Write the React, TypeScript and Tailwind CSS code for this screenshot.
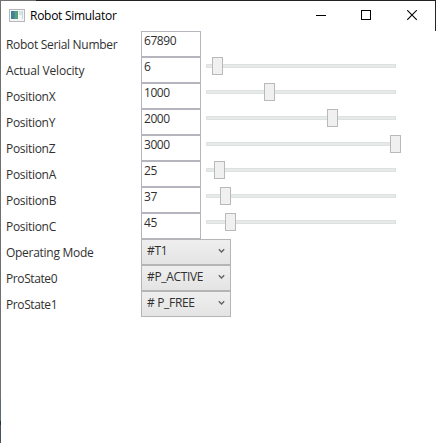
import React from "react";

type Row = { label: string; value: string; kind?: "select"; thumb?: number; labelWidth: string };

const rows: Row[] = [
  { label: "Robot Serial Number", value: "67890", labelWidth: "tracking-[-0.31px]" },
  { label: "Actual Velocity", value: "6", thumb: 6, labelWidth: "tracking-[-0.18px]" },
  { label: "PositionX", value: "1000", thumb: 58, labelWidth: "tracking-[-0.3px]" },
  { label: "PositionY", value: "2000", thumb: 121, labelWidth: "tracking-[-0.3px]" },
  { label: "PositionZ", value: "3000", thumb: 184, labelWidth: "tracking-[-0.3px]" },
  { label: "PositionA", value: "25", thumb: 8, labelWidth: "tracking-[-0.3px]" },
  { label: "PositionB", value: "37", thumb: 14, labelWidth: "tracking-[-0.3px]" },
  { label: "PositionC", value: "45", thumb: 19, labelWidth: "tracking-[-0.3px]" },
  { label: "Operating Mode", value: "#T1", kind: "select", labelWidth: "tracking-[-0.28px]" },
  { label: "ProState0", value: "#P_ACTIVE", kind: "select", labelWidth: "tracking-[-0.4px]" },
  { label: "ProState1", value: "# P_FREE", kind: "select", labelWidth: "tracking-[-0.4px]" },
];

function Slider({ thumb }: { thumb: number }) {
  return (
    <div className="relative ml-[5px] mt-[7px] h-1 w-[190px] border border-[#dde1e0] bg-[#e6eae9]">
      <div
        className="absolute -top-2 h-[18px] w-[11px] border border-[#b9b9b9] bg-[#f0f0f0]"
        style={{ left: thumb - 1 }}
      />
    </div>
  );
}

function TitleBar() {
  return (
    <header className="flex h-[30px] shrink-0 items-start text-black">
      <svg className="ml-2 mt-2 shrink-0" width="16" height="13" viewBox="0 0 16 13">
        <rect x="0.5" y="0.5" width="15" height="12" fill="#f5f5f5" stroke="#b5b8bb" />
        <rect x="2" y="2" width="7" height="8" fill="#4b8b91" />
        <path d="M2 2h3v8H2z" fill="#437f99" />
        <path d="M6 2h3v8H6z" fill="#55a17b" />
        <rect x="10" y="2" width="4" height="4" fill="#d4e4e5" />
        <rect x="13" y="2" width="1" height="8" fill="#c5dadd" />
      </svg>
      <h1 className="ml-[5px] mt-[7px] whitespace-pre text-xs leading-4 tracking-[-0.28px]">Robot Simulator</h1>
      <div className="ml-auto mr-[17px] mt-[9px] flex">
        <svg width="10" height="10" viewBox="0 0 10 10"><path d="M0 5.5h10" stroke="black" /></svg>
        <svg className="ml-[35px]" width="10" height="10" viewBox="0 0 10 10"><rect x=".5" y=".5" width="9" height="9" fill="none" stroke="black" /></svg>
        <svg className="ml-[36px]" width="11" height="11" viewBox="0 0 11 11"><path d="M.2 .2l9.6 9.6M9.8 .2l-9.6 9.6" stroke="black" strokeWidth="1.1" /></svg>
      </div>
    </header>
  );
}

export default function App() {
  return (
    <div className="flex h-[443px] w-[436px] overflow-hidden bg-white">
      {/* window edge */}
      <div className="flex w-px shrink-0 flex-col bg-[#707070]">
        <div className="mt-[399px] h-[22px] bg-[#5b6b74]" />
        <div className="h-[4px] bg-[#2b3038]" />
        <div className="flex-1 bg-[#475061]" />
      </div>
      <main className="flex w-[435px] flex-col font-['Open_Sans','Noto_Sans',sans-serif] text-xs text-[#303030]">
        <div className="flex h-px shrink-0 bg-[#242226]">
          <div className="w-[35px] bg-[#707070]" />
        </div>
        <div className="flex shrink-0">
          <div className="w-[434px]"><TitleBar /></div>
          <div className="w-px bg-[#242424]" />
        </div>
        {rows.map((r) => (
          <div key={r.label} className="flex h-[26px] shrink-0 items-start">
            <div className={`w-[140px] whitespace-pre pl-[5px] pt-[6px] leading-4 ${r.labelWidth}`}>{r.label}</div>
            {r.kind === "select" ? (
              <div className="flex h-[26px] w-[90px] justify-between border border-[#b5b5b5] bg-linear-to-b from-[#efefef] to-[#e4e4e4] pl-[5px] pr-[5px] pt-[3px] leading-4 tracking-[-0.33px]">
                <span className="whitespace-pre">{r.value}</span>
                <svg className="mt-[5px]" width="7" height="6" viewBox="0 0 7 6">
                  <path d="M.8 1.3L3.5 4l2.7-2.7" fill="none" stroke="#606060" strokeWidth="1.3" />
                </svg>
              </div>
            ) : (
              <div className="h-[26px] w-[60px] border border-[#b4b5bd] bg-white pl-[2px] pt-px leading-4 tracking-[-0.45px]">{r.value}</div>
            )}
            {r.thumb !== undefined && <Slider thumb={r.thumb} />}
          </div>
        ))}
      </main>
    </div>
  );
}
